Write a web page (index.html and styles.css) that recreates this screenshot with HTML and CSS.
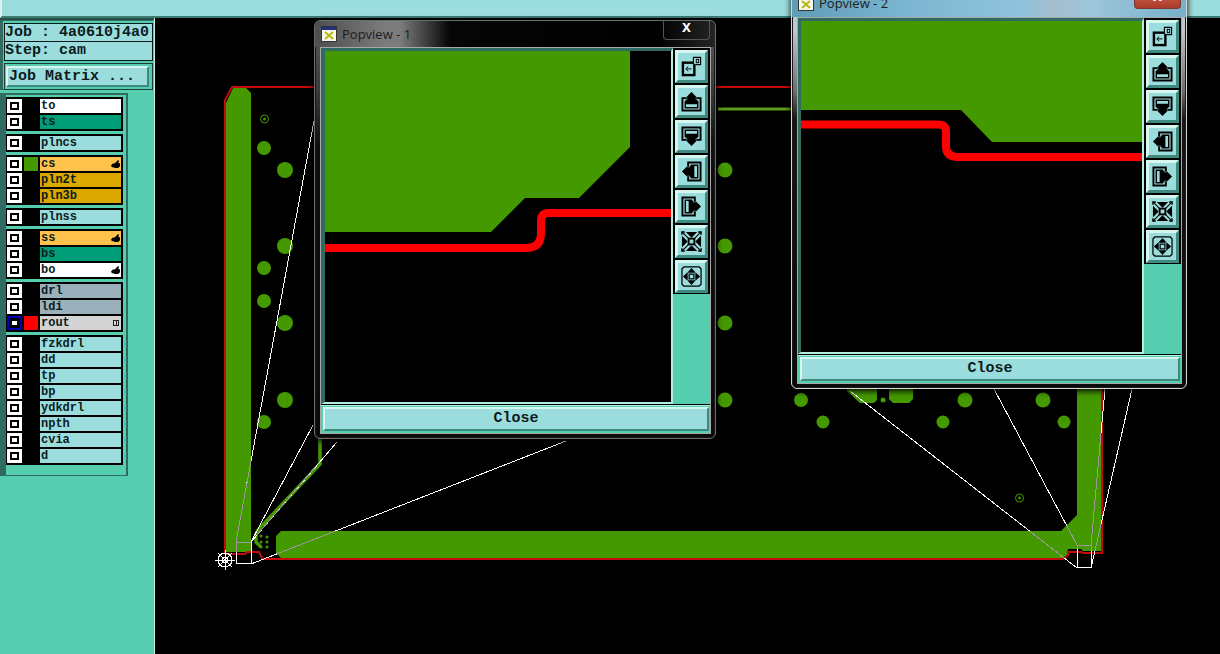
FILE: index.html
```html
<!DOCTYPE html>
<html lang="en">
<head>
<meta charset="utf-8">
<title>Popview</title>
<link rel="stylesheet" href="styles.css">
</head>
<body>
<svg class="sprite" xmlns="http://www.w3.org/2000/svg">
  <symbol id="i-hand" viewBox="0 0 10 10"><path d="M0 6 2 4H4L6 2 8 0 9 1 8 3 10 4V7L8 9H4L3 8H1Z"/></symbol>
  <symbol id="i-zoom" viewBox="0 0 22 22">
    <rect x="2" y="7" width="12" height="13" fill="none" stroke="#000" stroke-width="2.500"/>
    <path d="M11 13.500H5.500M7.500 11 5 13.500 7.500 16" fill="none" stroke="#000"/>
    <path d="M13 7V1.500H20.500V9H15" fill="#9bdcdc" stroke="#000" stroke-width="1.200"/>
    <rect x="16" y="3.500" width="2.500" height="3.500" fill="none" stroke="#000"/>
  </symbol>
  <symbol id="i-up" viewBox="0 0 22 22">
    <g id="pan">
      <path d="M6 7.500H1.500V20.500H20.500V7.500H16" fill="none" stroke="#000" stroke-width="2"/>
      <path d="M6 11H4.500V17.500H17.500V11H16" fill="none" stroke="#000" stroke-width="1.500"/>
      <path d="M11 1 16.500 6.500H15.500V9H17V14H5V9H6.500V6.500H5.500Z"/>
    </g>
  </symbol>
  <symbol id="i-down" viewBox="0 0 22 22"><use href="#pan" transform="rotate(180 11 11)"/></symbol>
  <symbol id="i-left" viewBox="0 0 22 22"><use href="#pan" transform="rotate(-90 11 11)"/></symbol>
  <symbol id="i-right" viewBox="0 0 22 22"><use href="#pan" transform="rotate(90 11 11)"/></symbol>
  <symbol id="i-fit" viewBox="0 0 22 22">
    <path d="M1 4V1H4M18 1H21V4M21 18V21H18M4 21H1V18" fill="none" stroke="#000" stroke-width="1.500"/>
    <path d="M1 1 8 8M21 1 14 8M1 21 8 14M21 21 14 14" stroke="#000" stroke-width="1.200"/>
    <rect x="8" y="8" width="6" height="6" fill="none" stroke="#000" stroke-width="2"/>
    <path d="M5 1H17L11 7ZM5 21H17L11 15ZM1 5V17L7 11ZM21 5V17L15 11Z"/>
  </symbol>
  <symbol id="i-all" viewBox="0 0 22 22">
    <path d="M3 1H19L21 3V19L19 21H3L1 19V3Z" fill="none" stroke="#000" stroke-width="1.300"/>
    <rect x="8.500" y="8.500" width="5" height="5" fill="none" stroke="#000" stroke-width="1.300"/>
    <path d="M11 2 15.500 7H6.500ZM11 20 15.500 15H6.500ZM2 11 7 6.500V15.500ZM20 11 15 6.500V15.500Z"/>
  </symbol>
  <symbol id="i-app" viewBox="0 0 16 16">
    <rect x=".5" y=".5" width="15" height="15" fill="#f6f6ea" stroke="#333"/>
    <rect x="1" y="1" width="14" height="3" fill="#24307c"/>
    <path d="M4 6 12 13M12 6 4 13" stroke="#b9b815" stroke-width="2"/>
  </symbol>
</svg>

<header class="topbar"></header>

<div class="workspace">
  <aside class="sidebar">
    <section class="info">
      <div class="info-line job">Job : 4a0610j4a0</div>
      <div class="info-line step">Step: cam</div>
      <div class="matrix"><button class="bevel matrix-btn">Job Matrix ...</button></div>
    </section>

    <section class="layers">
      <div class="group">
        <div class="row"><span class="check"></span><span class="swatch"></span><span class="label white">to</span></div>
        <div class="row"><span class="check"></span><span class="swatch"></span><span class="label teal">ts</span></div>
      </div>
      <div class="group">
        <div class="row"><span class="check"></span><span class="swatch"></span><span class="label">plncs</span></div>
      </div>
      <div class="group">
        <div class="row"><span class="check"></span><span class="swatch green"></span><span class="label orange">cs<svg class="hand"><use href="#i-hand"/></svg></span></div>
        <div class="row"><span class="check"></span><span class="swatch"></span><span class="label gold">pln2t</span></div>
        <div class="row"><span class="check"></span><span class="swatch"></span><span class="label gold">pln3b</span></div>
      </div>
      <div class="group">
        <div class="row"><span class="check"></span><span class="swatch"></span><span class="label">plnss</span></div>
      </div>
      <div class="group">
        <div class="row"><span class="check"></span><span class="swatch"></span><span class="label orange">ss<svg class="hand"><use href="#i-hand"/></svg></span></div>
        <div class="row"><span class="check"></span><span class="swatch"></span><span class="label teal">bs</span></div>
        <div class="row"><span class="check"></span><span class="swatch"></span><span class="label white">bo<svg class="hand"><use href="#i-hand"/></svg></span></div>
      </div>
      <div class="group">
        <div class="row"><span class="check"></span><span class="swatch"></span><span class="label slate">drl</span></div>
        <div class="row"><span class="check"></span><span class="swatch"></span><span class="label slate">ldi</span></div>
        <div class="row"><span class="check active"></span><span class="swatch red"></span><span class="label silver">rout<span class="box-mark"></span></span></div>
      </div>
      <div class="group">
        <div class="row"><span class="check"></span><span class="swatch"></span><span class="label">fzkdrl</span></div>
        <div class="row"><span class="check"></span><span class="swatch"></span><span class="label">dd</span></div>
        <div class="row"><span class="check"></span><span class="swatch"></span><span class="label">tp</span></div>
        <div class="row"><span class="check"></span><span class="swatch"></span><span class="label">bp</span></div>
        <div class="row"><span class="check"></span><span class="swatch"></span><span class="label">ydkdrl</span></div>
        <div class="row"><span class="check"></span><span class="swatch"></span><span class="label">npth</span></div>
        <div class="row"><span class="check"></span><span class="swatch"></span><span class="label">cvia</span></div>
        <div class="row"><span class="check"></span><span class="swatch"></span><span class="label">d</span></div>
      </div>
    </section>
  </aside>

  <main class="canvas">
    <svg class="board" viewBox="155 18 1065 636" xmlns="http://www.w3.org/2000/svg">
      <defs>
        <polygon id="strip-left" points="226,103 233,88 246,88 251,93 251,552 226,552"/>
        <polygon id="strip-bottom" points="276,536 281,531 1061,531 1077,515 1077,380 1101,380 1101,551 1083,551 1081,549 1068,549 1067,556 1064,558 281,558 276,553"/>
        <clipPath id="on-copper"><use href="#strip-left"/><use href="#strip-bottom"/></clipPath>
        <g id="rats" fill="none" stroke-width="1">
          <path d="M236 542 314 121M251 542 313 425M251 542 337 442M251 564 566 441"/>
          <path d="M1077 545 994 389M1077 568 850 391M1091 545 1105 389M1091 568 1132 389"/>
          <rect x="236.500" y="542.500" width="15" height="21"/>
          <rect x="1077.500" y="545.500" width="14" height="22"/>
        </g>
      </defs>
      <g class="copper">
        <use href="#strip-left"/>
        <use href="#strip-bottom"/>
        <circle cx="264" cy="148" r="7"/><circle cx="285" cy="170" r="8"/>
        <circle cx="285" cy="246" r="8"/><circle cx="264" cy="268" r="7"/>
        <circle cx="264" cy="301" r="7"/><circle cx="285" cy="323" r="8"/>
        <circle cx="285" cy="400" r="8"/><circle cx="264" cy="422" r="7"/>
        <circle cx="725" cy="170" r="7.500"/><circle cx="725" cy="246" r="7.500"/>
        <circle cx="725" cy="323" r="7.500"/><circle cx="725" cy="400" r="7.500"/>
        <circle cx="801" cy="400" r="7"/><circle cx="823" cy="422" r="6.500"/>
        <circle cx="943" cy="422" r="6.500"/><circle cx="965" cy="400" r="7.500"/>
        <circle cx="1043" cy="400" r="7.500"/><circle cx="1064" cy="422" r="6.500"/>
        <polygon points="847,385 877,385 877,400 874,403 860,403 847,391"/>
        <circle cx="883" cy="400" r="2.500"/>
        <path d="M889 385H913V399L909 403H893L889 399Z"/>
        <circle cx="261" cy="536" r="1.500"/><circle cx="267" cy="537" r="1.500"/>
        <circle cx="261" cy="542" r="1.500"/><circle cx="267" cy="542" r="1.500"/>
        <circle cx="261" cy="547" r="1.500"/><circle cx="267" cy="547" r="1.500"/>
      </g>
      <path class="outline" d="M225 554V100L232 87H1102M225 554 245 554 247 552 259 552 261 556 263 559H1063L1068 555V552H1081L1083 553 1102 553V380"/>
      <path class="trace" d="M320 430V464L258 530 256 534V542L261 547"/>
      <path class="trace-thin" d="M718 109H792"/>
      <g class="target"><circle cx="264.500" cy="119" r="4"/><circle class="dot" cx="264.500" cy="119" r="1"/></g>
      <g class="target"><circle cx="1019.500" cy="498" r="4"/><circle class="dot" cx="1019.500" cy="498" r="1"/></g>
      <use href="#rats" class="rats-white"/>
      <g clip-path="url(#on-copper)"><use href="#rats" class="rats-grey"/></g>
      <path class="rats-grey" d="M257 535 316 466" fill="none"/>
      <g class="spider">
        <circle cx="225" cy="560" r="2.500"/><circle cx="225" cy="560" r="7"/>
        <path d="M215 560H235M225 550V570M218 553 232 567M232 553 218 567"/>
      </g>
    </svg>
  </main>
</div>

<article class="win win-one">
  <div class="titlebar">
    <svg class="app-icon"><use href="#i-app"/></svg>
    <span class="title">Popview - 1</span>
    <span class="win-x">x</span>
  </div>
  <div class="client">
    <div class="pane">
      <div class="view">
        <svg viewBox="325 51 346 351" xmlns="http://www.w3.org/2000/svg">
          <polygon class="fill-green" points="325,51 630,51 630,147 579,198 525,198 491,232 325,232"/>
          <path class="fill-trace" d="M325 248H526Q541 248 541 233V221Q541 213 549 213H671"/>
        </svg>
      </div>
      <div class="tools">
        <div class="tool-list">
          <button class="bevel tool"><svg><use href="#i-zoom"/></svg></button>
          <button class="bevel tool"><svg><use href="#i-up"/></svg></button>
          <button class="bevel tool"><svg><use href="#i-down"/></svg></button>
          <button class="bevel tool"><svg><use href="#i-left"/></svg></button>
          <button class="bevel tool"><svg><use href="#i-right"/></svg></button>
          <button class="bevel tool"><svg><use href="#i-fit"/></svg></button>
          <button class="bevel tool"><svg><use href="#i-all"/></svg></button>
        </div>
      </div>
    </div>
    <div class="closebar"><button class="bevel close-btn">Close</button></div>
  </div>
</article>

<article class="win win-two">
  <div class="titlebar">
    <svg class="app-icon"><use href="#i-app"/></svg>
    <span class="title">Popview - 2</span>
    <span class="win-x">x</span>
  </div>
  <div class="client">
    <div class="pane">
      <div class="view">
        <svg viewBox="801 21 341 331" xmlns="http://www.w3.org/2000/svg">
          <polygon class="fill-green" points="801,21 1142,21 1142,142 992,142 961,110 801,110"/>
          <path class="fill-trace" d="M801 124.500H938Q946 124.500 946 132V146Q946 157 958 157H1142"/>
        </svg>
      </div>
      <div class="tools">
        <div class="tool-list">
          <button class="bevel tool"><svg><use href="#i-zoom"/></svg></button>
          <button class="bevel tool"><svg><use href="#i-up"/></svg></button>
          <button class="bevel tool"><svg><use href="#i-down"/></svg></button>
          <button class="bevel tool"><svg><use href="#i-left"/></svg></button>
          <button class="bevel tool"><svg><use href="#i-right"/></svg></button>
          <button class="bevel tool"><svg><use href="#i-fit"/></svg></button>
          <button class="bevel tool"><svg><use href="#i-all"/></svg></button>
        </div>
      </div>
    </div>
    <div class="closebar"><button class="bevel close-btn">Close</button></div>
  </div>
</article>
</body>
</html>
```

FILE: styles.css
```css
* { box-sizing: border-box; }

html, body {
  margin: 0;
  height: 100%;
}

body {
  position: relative;
  width: 1220px;
  height: 654px;
  overflow: hidden;
  display: flex;
  flex-direction: column;
  background: #000;
  color: #0c1c1c;
  font-family: "Liberation Mono", monospace;
}

.sprite { display: none; }

.topbar {
  height: 18px;
  flex: none;
  background: #9bdcdc;
  border-left: 2px solid #d8f4f0;
  border-bottom: 2px solid #3d7a72;
}

.workspace {
  flex: 1;
  display: flex;
  min-height: 0;
}

/* ---------- sidebar ---------- */
.sidebar {
  width: 155px;
  flex: none;
  padding: 2px 1px 0 0;
  background: #55ceb0;
  border-right: 1px solid #c4efe4;
  box-shadow: inset 0 2px 0 #244f47;
}

.info {
  height: 70px;
  padding: 2px 0 0 1px;
  border: 1px solid #2f6b60;
  border-left-width: 3px;
  border-right-width: 0;
}

.info-line {
  height: 19px;
  width: 149px;
  padding-left: 0;
  background: #9bdcdc;
  border: 1px solid #0a1a1a;
  font-size: 15px;
  font-weight: 700;
  line-height: 17px;
  white-space: pre;
}

.info-line.step { margin-top: -1px; height: 20px; }

.matrix {
  width: 149px;
  height: 27px;
  margin-top: 2px;
  padding: 2px 3px 2px 1px;
  border: 1px solid #1c3d38;
}

.bevel {
  display: block;
  margin: 0;
  padding: 0;
  background: #9bdcdc;
  color: #0c1c1c;
  font-family: "Liberation Mono", monospace;
  font-weight: 700;
  border-style: solid;
  border-color: #d8f6f0 #3f8a7e #3f8a7e #d8f6f0;
  border-radius: 0;
}

.matrix-btn {
  width: 100%;
  height: 100%;
  padding: 0 0 0 1px;
  border-width: 2px;
  font-size: 15px;
  text-align: left;
}

.layers {
  width: 128px;
  height: 383px;
  margin-top: 3px;
  padding: 2px 3px 0 0;
  display: flex;
  flex-direction: column;
  gap: 3px;
  border: 2px solid #2f6b60;
  border-left-width: 6px;
  border-bottom: 1px solid #2f6b60;
}

.group {
  display: flex;
  flex-direction: column;
  gap: 2px;
  padding: 2px 2px 2px 1px;
  background: #000;
}

.row {
  display: flex;
  height: 14px;
  gap: 2px;
}

.check {
  width: 15px;
  flex: none;
  background: #fff;
  border: 3px solid #fff;
  box-shadow: inset 0 0 0 2px #000;
}

.check.active {
  border: 2px solid #0000b4;
  box-shadow: inset 0 0 0 3px #000;
}

.swatch { width: 14px; flex: none; background: #000; }
.swatch.green { background: #449900; }
.swatch.red { background: #ff0000; }

.label {
  flex: 1;
  position: relative;
  padding-left: 1px;
  background: #9bdcdc;
  font-size: 12px;
  font-weight: 700;
  line-height: 15px;
}

.white { background: #fff; }
.teal { background: #009e78; }
.orange { background: #ffc34d; }
.gold { background: #dba800; }
.slate { background: #9ab0ba; }
.silver { background: #d3d3d3; }

.hand {
  position: absolute;
  right: 1px;
  top: 3px;
  width: 9px;
  height: 9px;
}

.box-mark {
  position: absolute;
  right: 2px;
  top: 4px;
  width: 6px;
  height: 6px;
  border: 1px solid #222;
  background: linear-gradient(#222, #222) center / 1px 100% no-repeat, #d3d3d3;
}

/* ---------- board ---------- */
.canvas {
  flex: 1;
  min-width: 0;
}

.board {
  display: block;
  width: 1065px;
  height: 636px;
}

.outline { fill: none; stroke: #c40a0a; stroke-width: 2; }
.copper { fill: #449900; }
.trace { fill: none; stroke: #449900; stroke-width: 3.500; }
.trace-thin { fill: none; stroke: #5d9a1c; stroke-width: 3; }
.target { fill: none; stroke: #449900; stroke-width: 1; }
.target .dot { fill: #449900; }
.rats-white { stroke: #fff; shape-rendering: crispEdges; }
.rats-grey { stroke: #9a9a9a; shape-rendering: crispEdges; }
.spider { fill: none; stroke: #fff; stroke-width: 1; shape-rendering: crispEdges; }

/* ---------- popup windows ---------- */
.win {
  position: absolute;
  display: flex;
  flex-direction: column;
  padding: 0 4px 4px 5px;
  border-radius: 6px;
  border: 1px solid #6c6c6c;
  box-shadow: 0 2px 6px #000, inset 0 0 0 1px #1a1a1a;
}

.win-one {
  left: 314px;
  top: 20px;
  width: 402px;
  height: 419px;
  background:
    linear-gradient(180deg, #5c5c5c 0, #505050 24px, #3a3a3a 70px, #0e0e0e 125px, #0a0a0a 100%);
}

.win-two {
  left: 791px;
  top: -11px;
  width: 396px;
  height: 400px;
  border-color: #d6d6d6;
  background:
    linear-gradient(180deg, #a9c6d4 0, #bfc9cf 40px, #6f7070 100px, #161616 130px, #0a0a0a 100%);
}

.titlebar {
  position: relative;
  flex: none;
  margin: 0 -4px 0 -5px;
  padding: 5px 0 0 6px;
  display: flex;
  align-items: flex-start;
  gap: 5px;
  border-radius: 5px 5px 0 0;
}

.win-one .titlebar {
  height: 26px;
  background: linear-gradient(90deg, #4e4e4e 0, #7c7c7c 70px, #7c7c7c 85px, #060606 135px, #000 340px, #242424 100%);
}

.win-two .titlebar {
  height: 27px;
  background: linear-gradient(90deg, #5e9cb6 0, #7db6d1 120px, #8fc3dc 230px, #a6bdcc 260px, #9cc6dc 300px, #78b0c8 100%);
}

.app-icon {
  width: 16px;
  height: 16px;
  flex: none;
}

.title {
  font-family: "Open Sans", "Noto Sans", sans-serif;
  font-size: 13px;
  line-height: 16px;
  color: #1c1c1c;
}

.win-x {
  position: absolute;
  right: 5px;
  top: 0;
  width: 47px;
  height: 19px;
  border: 1px solid #555;
  border-top: 0;
  border-radius: 0 0 4px 4px;
  color: #fff;
  font-family: "Liberation Sans", sans-serif;
  font-size: 16px;
  font-weight: 700;
  line-height: 12px;
  text-align: center;
}

.win-two .win-x {
  background: linear-gradient(180deg, #d9644c, #a93b2c);
  border-color: #7a3a30;
}

.client {
  flex: 1;
  min-height: 0;
  display: flex;
  flex-direction: column;
  gap: 1px;
  background: #000;
  border: 1px solid #a8a8a8;
}

.pane {
  flex: none;
  display: flex;
}

.win-one .pane { height: 356px; }
.win-two .pane { height: 336px; }

.view {
  flex: 1;
  min-width: 0;
  background: #000;
  border-style: solid;
  border-color: #2f6b60 #b4ece0 #b4ece0 #2f6b60;
  border-width: 3px 2px 2px 3px;
}

.win-one .view { border-left-width: 4px; }

.view svg {
  display: block;
  width: 100%;
  height: 100%;
}

.fill-green { fill: #449900; }
.fill-trace { fill: none; stroke: #ff0000; stroke-width: 8; }

.tools {
  width: 37px;
  flex: none;
  background: #55ceb0;
}

.tool-list {
  display: flex;
  flex-direction: column;
  gap: 2px;
  padding: 2px 2px 1px;
  background: #000;
}

.tool {
  width: 33px;
  height: 33px;
  padding: 3px;
  border-width: 3px;
}

.tool svg {
  display: block;
  width: 21px;
  height: 21px;
}

.closebar {
  height: 28px;
  flex: none;
  padding: 1px 1px 2px 2px;
  background: #55ceb0;
  border-top: 1px solid #b4ece0;
}

.close-btn {
  width: 100%;
  height: 100%;
  border-width: 2px;
  font-size: 15px;
  line-height: 20px;
  text-align: center;
}
```
